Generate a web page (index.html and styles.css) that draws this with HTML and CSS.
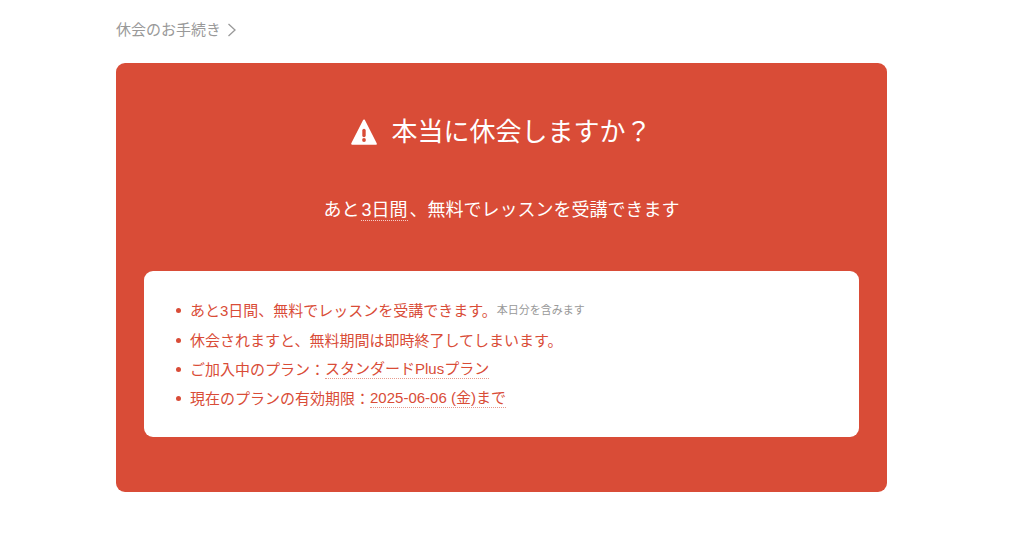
FILE: index.html
```html
<!DOCTYPE html>
<html lang="ja">
<head>
  <meta charset="utf-8">
  <meta name="viewport" content="width=device-width, initial-scale=1">
  <title>休会のお手続き</title>
  <link rel="stylesheet" href="styles.css">
</head>
<body>
  <div class="page">
    <header class="page-header">
      <h2 class="page-title">休会のお手続き</h2>
      <svg class="chevron" viewBox="0 0 10 14" aria-hidden="true"><path d="M1.500 1 8 7l-6.500 6"/></svg>
    </header>
    <main class="card">
      <h1 class="card-title">
        <svg class="warning" viewBox="0 0 26 26" aria-hidden="true">
          <path class="warning-body" d="M13 1.500 24.800 24.800H1.200Z"/>
          <path class="warning-mark" d="M13 11.500v5"/>
          <circle class="warning-dot" cx="13" cy="21" r="1.900"/>
        </svg>
        <span>本当に休会しますか？</span>
      </h1>
      <p class="lead">あと<span class="term term-light">3日間</span>、無料でレッスンを受講できます</p>
      <ul class="notes">
        <li class="note note-first">あと3日間、無料でレッスンを受講できます。<small class="hint">本日分を含みます</small></li>
        <li class="note">休会されますと、無料期間は即時終了してしまいます。</li>
        <li class="note">ご加入中のプラン：<span class="term">スタンダードPlusプラン</span></li>
        <li class="note">現在のプランの有効期限：<span class="term">2025-06-06 (金)まで</span></li>
      </ul>
    </main>
  </div>
</body>
</html>
```
FILE: styles.css
```css
* {
  box-sizing: border-box;
}

body {
  margin: 0;
  background: #fff;
  color: #d94c37;
  font-family: "Liberation Sans", "Noto Sans CJK JP", sans-serif;
  font-size: 15px;
}

.page {
  padding: 18px 137px 46px 116px;
}

.page-header {
  display: flex;
  align-items: center;
  gap: 6px;
  margin-bottom: 21px;
  color: #999;
}

.page-title {
  margin: 0;
  font-size: 15px;
  font-weight: 400;
  line-height: 24px;
}

.chevron {
  width: 10px;
  height: 14px;
  fill: none;
  stroke: #999;
  stroke-width: 1.3;
}

.card {
  padding: 50px 28px 55px;
  border-radius: 9px;
  background: #d94c37;
}

.card-title {
  display: flex;
  justify-content: center;
  align-items: center;
  gap: 14px;
  margin: 0 0 42px;
  color: #fff;
  font-size: 26px;
  font-weight: 400;
  line-height: 38px;
}

.warning {
  width: 26px;
  height: 26px;
}

.warning-body {
  fill: #fff;
  stroke: #fff;
  stroke-width: 2;
  stroke-linejoin: round;
}

.warning-mark {
  fill: none;
  stroke: #d94c37;
  stroke-width: 3.4;
  stroke-linecap: round;
}

.warning-dot {
  fill: #d94c37;
}

.lead {
  margin: 0 0 44px;
  color: #fff;
  font-size: 18px;
  line-height: 34px;
  text-align: center;
}

.term {
  border-bottom: 1px dotted #e79a8d;
}

.term-light {
  margin: 0 2px;
  border-bottom-color: #f6cfc8;
}

.notes {
  margin: 0;
  padding: 24px 24px 24px 32px;
  border-radius: 9px;
  background: #fff;
  list-style: none;
}

.note {
  display: flex;
  align-items: center;
  line-height: 29px;
}

.note::before {
  content: "";
  flex: none;
  width: 5px;
  height: 5px;
  margin-right: 9px;
  border-radius: 50%;
  background: #d94c37;
}

.note .term {
  line-height: 18px;
}

.note-first {
  line-height: 31px;
}

.hint {
  color: #999;
  font-size: 11px;
}
```
